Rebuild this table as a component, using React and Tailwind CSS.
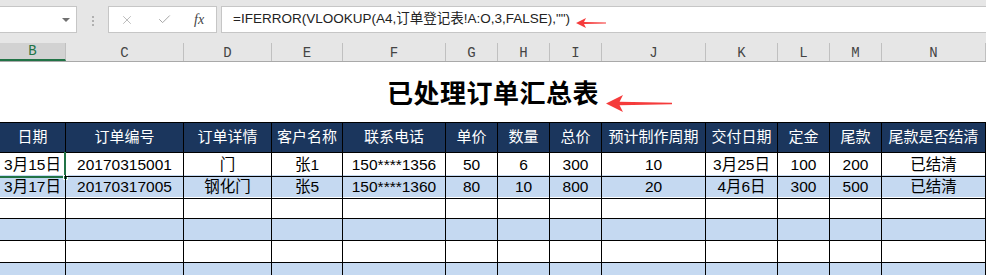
import React from 'react';
import { X, Check } from 'lucide-react';

const cols = ['B', 'C', 'D', 'E', 'F', 'G', 'H', 'I', 'J', 'K', 'L', 'M', 'N'];
const gridCols = 'grid grid-cols-[66px_118px_88px_71px_103px_52px_52px_52px_104px_72px_52px_52px_104px]';

const headers = ['日期', '订单编号', '订单详情', '客户名称', '联系电话', '单价', '数量', '总价', '预计制作周期', '交付日期', '定金', '尾款', '尾款是否结清'];

const rows = [
    ['3月15日', '20170315001', '门', '张1', '150****1356', '50', '6', '300', '10', '3月25日', '100', '200', '已结清'],
    ['3月17日', '20170317005', '钢化门', '张5', '150****1360', '80', '10', '800', '20', '4月6日', '300', '500', '已结清'],
    Array(13).fill(''),
    Array(13).fill(''),
    Array(13).fill(''),
    Array(13).fill(''),
];

const font = 'font-["Liberation_Sans","Noto_Sans_CJK_SC",sans-serif]';

const Arrow = ({ className, w, h }) => (
    <svg className={className} width={w} height={h} viewBox={`0 0 ${w} ${h}`}>
        <polygon
            points={`0,${h / 2} ${h},0 ${h * 0.8},${h * 0.4} ${w},${h * 0.46} ${w},${h * 0.54} ${h * 0.8},${h * 0.6} ${h},${h}`}
            fill="#f53b3b"
        />
    </svg>
);

export default function App() {
    return (
        <div className={`relative w-[986px] h-[275px] overflow-hidden bg-white ${font}`}>
            {/* formula bar */}
            <div className="flex items-start h-[43px] pt-[6px] bg-[#e6e6e6]">
                <div className="flex items-center justify-end w-[77px] h-[27px] pr-[6px] bg-white border border-l-0 border-[#c6c6c6]">
                    <div className="w-0 h-0 border-x-[4px] border-x-transparent border-t-[4px] border-t-[#707070]" />
                </div>
                <div className="flex flex-col items-center gap-[2px] w-[31px] pt-[10px]">
                    <span className="w-[2px] h-[2px] bg-[#b0b0b0]" />
                    <span className="w-[2px] h-[2px] bg-[#b0b0b0]" />
                    <span className="w-[2px] h-[2px] bg-[#b0b0b0]" />
                </div>
                <div className="flex items-center w-[109px] h-[27px] pl-[11px] bg-white border border-[#c6c6c6]">
                    <X size={14} strokeWidth={1.3} color="#a6a6a6" />
                    <Check size={15} strokeWidth={1.6} color="#a6a6a6" className="ml-[23px]" />
                    <span className="ml-[22px] font-['Liberation_Serif',serif] italic text-[14px] text-[#444]">fx</span>
                </div>
                <div className="flex flex-1 items-center h-[27px] ml-[4px] pl-[11px] bg-white border border-r-0 border-[#c6c6c6] text-[13.5px] text-[#222]">
                    =IFERROR(VLOOKUP(A4,订单登记表!A:O,3,FALSE),"")
                </div>
            </div>

            {/* column letters */}
            <div className={`${gridCols} h-[19px] bg-[#e6e6e6] border-b border-[#a9a9a9]`}>
                {cols.map((c, i) => (
                    <div
                        key={c}
                        className={
                            'flex items-end justify-center pb-[1px] border-r border-[#c0c0c0] font-["Liberation_Mono",monospace] text-[14px] leading-none ' +
                            (i === 0 ? 'bg-[#d2d2d2] text-[#217346] border-b-2 border-b-[#217346]' : 'text-[#444]')
                        }
                    >
                        {c}
                    </div>
                ))}
            </div>

            {/* title */}
            <div className="flex items-center justify-center h-[60px] pt-[4px]">
                <h1 className="text-[26px] font-bold text-black tracking-[0.5px]">已处理订单汇总表</h1>
            </div>

            {/* table */}
            <div className="border-t border-black">
                <div className={`${gridCols} h-[30px] bg-[#1b365d]`}>
                    {headers.map((h) => (
                        <div key={h} className="flex items-center justify-center border-r border-b border-black text-[15px] text-white whitespace-nowrap">
                            {h}
                        </div>
                    ))}
                </div>
                {rows.map((r, ri) => (
                    <div key={ri} className={`${gridCols} h-[22px] ${ri % 2 ? 'bg-[#c5d9f1]' : 'bg-white'}`}>
                        {r.map((v, ci) => (
                            <div
                                key={ci}
                                className="relative flex items-center justify-center border-r border-b border-black text-[15.5px] text-black whitespace-nowrap"
                            >
                                {v}
                                {ri === 0 && ci === 0 && (
                                    <>
                                        <div className="absolute -top-px -left-px right-[-1px] bottom-[-2px] border-r-2 border-b-2 border-[#217346]" />
                                        <div className="absolute right-[-3px] bottom-[-4px] w-[5px] h-[5px] bg-[#217346] border border-white" />
                                    </>
                                )}
                            </div>
                        ))}
                    </div>
                ))}
            </div>

            {/* annotation arrows */}
            <Arrow className="absolute left-[576px] top-[18px]" w={30} h={10} />
            <Arrow className="absolute left-[606px] top-[95px]" w={66} h={17} />
        </div>
    );
}
